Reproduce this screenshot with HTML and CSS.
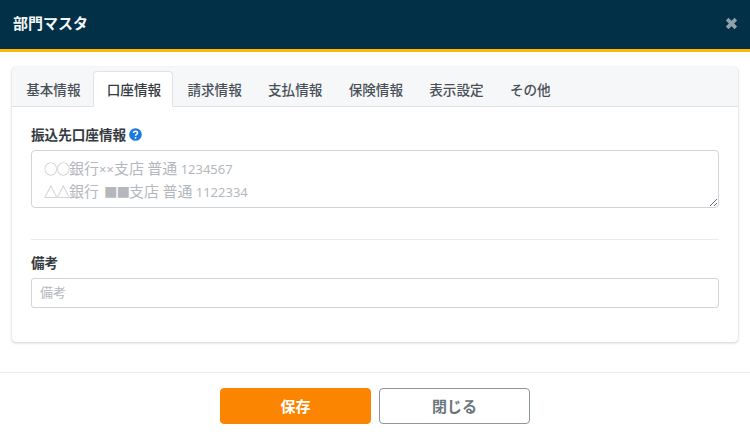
FILE: index.html
```html
<!DOCTYPE html>
<html lang="ja">
<head>
<meta charset="utf-8">
<title>部門マスタ</title>
<link rel="stylesheet" href="styles.css">
</head>
<body>
<div class="modal">
  <header class="modal-header">
    <h1 class="modal-title">部門マスタ</h1>
    <svg class="close" viewBox="0 0 12 12" width="13" height="13" aria-label="閉じる"><path d="M2 2 L10 10 M10 2 L2 10" /></svg>
  </header>
  <main class="modal-body">
    <section class="card">
      <nav class="tabs">
        <a class="tab">基本情報</a>
        <a class="tab active">口座情報</a>
        <a class="tab">請求情報</a>
        <a class="tab">支払情報</a>
        <a class="tab">保険情報</a>
        <a class="tab">表示設定</a>
        <a class="tab">その他</a>
      </nav>
      <div class="card-body">
        <div class="field-label">
          <label>振込先口座情報</label>
          <svg class="help" viewBox="0 0 14 14" width="13" height="13"><circle cx="7" cy="7" r="6.8"/><path d="M4.9 5.4 C4.9 2.9 9.2 2.9 9.2 5.3 C9.2 6.9 7 6.8 7 8.4"/><circle class="dot" cx="7" cy="10.6" r="1"/></svg>
        </div>
        <div class="textarea">
          <div><span class="sym lead">○○</span>銀行<span class="latin">××</span>支店 普通 <span class="latin">1234567</span></div>
          <div><span class="sym lead">△△</span>銀行<span class="sym mid">■■</span>支店 普通 <span class="latin">1122334</span></div>
        </div>
        <hr class="divider">
        <div class="field-label"><label>備考</label></div>
        <input class="input" type="text" placeholder="備考">
      </div>
    </section>
  </main>
  <footer class="modal-footer">
    <button class="btn primary">保存</button>
    <button class="btn secondary">閉じる</button>
  </footer>
</div>
</body>
</html>
```
FILE: styles.css
```css
* { box-sizing: border-box; }
html, body { margin: 0; padding: 0; }
body {
  width: 750px;
  height: 437px;
  overflow: hidden;
  background: #fff;
  font-family: "Noto Sans CJK JP", "Noto Sans", sans-serif;
  color: #343a40;
}
.modal { display: flex; flex-direction: column; height: 437px; }
.modal-header {
  height: 52px;
  flex: none;
  background: #023047;
  border-bottom: 3px solid #ffb703;
  display: flex;
  align-items: center;
  justify-content: space-between;
  padding: 0 12px 3px 13px;
}
.modal-title {
  margin: 0;
  font-size: 15px;
  font-weight: 700;
  line-height: 20px;
  color: #f4f6f7;
}
.close { fill: none; stroke: #8fa1ad; stroke-width: 3.4; }
.modal-body { padding: 15px 12px 0; height: 320px; flex: none; }
.card {
  height: 275px;
  border-radius: 4px;
  background: #fff;
  box-shadow: 0 0 1px rgba(0,0,0,.2), 0 1px 3px rgba(0,0,0,.18);
}
.tabs {
  height: 40px;
  display: flex;
  align-items: flex-end;
  background: #f6f7f9;
  border-bottom: 1px solid #dee2e6;
  border-radius: 4px 4px 0 0;
}
.tab {
  height: 36px;
  padding: 0 11.13px 0 13.13px;
  margin-bottom: -1px;
  display: flex;
  align-items: center;
  justify-content: center;
  font-size: 13.6px;
  line-height: 20px;
  font-weight: 500;
  color: #495057;
  border: 1px solid transparent;
  border-radius: 4px 4px 0 0;
}
.tab.active { background: #fff; border-color: #dee2e6 #dee2e6 #fff; color: #343a40; }
.card-body { padding: 17px 19px 0; }
.field-label {
  height: 26px;
  display: flex;
  align-items: flex-start;
  gap: 3px;
  font-size: 13.6px;
  font-weight: 700;
  line-height: 20px;
  color: #343a40;
}
.help { margin-top: 4px; }
.help circle { fill: #1a7ae0; }
.help path { fill: none; stroke: #fff; stroke-width: 1.7; }
.help .dot { fill: #fff; }
.textarea {
  width: 688px;
  height: 58px;
  padding: 5px 8px;
  border: 1px solid #ced4da;
  border-radius: 4px;
  font-size: 15px;
  font-weight: 400;
  line-height: 23px;
  color: #b4b8bd;
  overflow: auto;
  resize: both;
}
.latin { font-family: "Noto Sans", sans-serif; font-size: 13px; line-height: 1; }
.sym { font-size: 13.5px; letter-spacing: -1px; line-height: 1; }
.sym.lead { margin-left: 4px; }
.sym.mid { margin-left: 5px; }
.input::placeholder { color: #b4b8bd; opacity: 1; }
.divider { border: 0; border-top: 1px solid #e9ecef; margin: 31px 0 12px; }
.input {
  display: block;
  width: 688px;
  height: 30px;
  padding: 0 8px 3px;
  border: 1px solid #ced4da;
  border-radius: 3px;
  font: 400 13px "Noto Sans CJK JP", sans-serif;
  outline: 0;
}
.modal-footer {
  flex: 1;
  border-top: 1px solid #e9ecef;
  display: flex;
  justify-content: center;
  gap: 8px;
  padding-top: 15px;
}
.btn {
  width: 151px;
  height: 36px;
  border-radius: 4px;
  font: 700 15px/20px "Noto Sans CJK JP", sans-serif;
  padding: 0;
}
.primary { background: #fb8500; border: 1px solid #fb8500; color: #fff; }
.secondary { background: #fff; border: 1px solid #8d959d; color: #6c757d; }
```
